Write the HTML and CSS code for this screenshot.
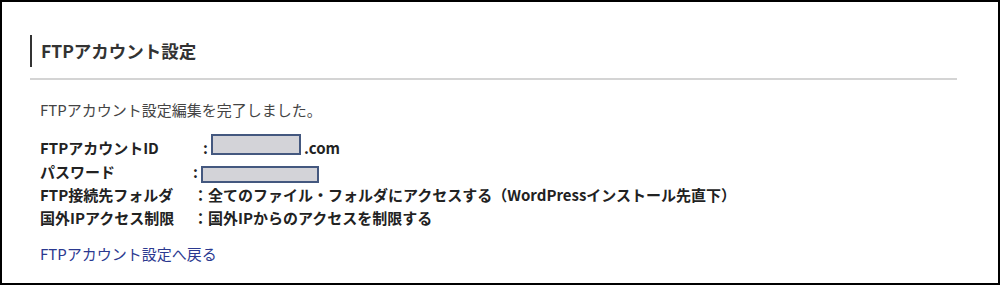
FILE: index.html
```html
<!DOCTYPE html>
<html lang="ja">
<head>
  <meta charset="UTF-8">
  <meta name="viewport" content="width=device-width, initial-scale=1.0">
  <title>FTPアカウント設定</title>
  <link rel="stylesheet" href="styles.css">
</head>
<body>
  <div class="frame">
    <div class="section">
      <!-- 見出し -->
      <div class="title-wrap">
        <h2 class="title">FTPアカウント設定</h2>
      </div>

      <div class="content">
        <p class="message">FTPアカウント設定編集を完了しました。</p>

        <!-- 設定内容 -->
        <div class="detail">
          <div class="row">
            <span class="label label-wide">FTPアカウントID</span><span class="colon">:</span><span class="mask mask-id"></span><span class="after">.com</span>
          </div>
          <div class="row">
            <span class="label">パスワード</span><span class="colon">:</span><span class="mask mask-pw"></span>
          </div>
          <div class="row">
            <span class="label">FTP接続先フォルダ</span><span>：全てのファイル・フォルダにアクセスする（WordPressインストール先直下）</span>
          </div>
          <div class="row">
            <span class="label">国外IPアクセス制限</span><span>：国外IPからのアクセスを制限する</span>
          </div>
        </div>

        <a class="back" href="#">FTPアカウント設定へ戻る</a>
      </div>
    </div>
  </div>
</body>
</html>
```

FILE: styles.css
```css
html, body {
  margin: 0;
  padding: 0;
  background: #fff;
  font-family: "Noto Sans CJK JP", sans-serif;
}
.frame {
  box-sizing: border-box;
  width: 1000px;
  height: 285px;
  border: 2px solid #000;
  padding: 33px 41px 0 28px;
}
/* 見出し */
.title-wrap {
  border-bottom: 2px solid #d4d4d4;
  padding-bottom: 11px;
}
.title {
  margin: 0;
  border-left: 2px solid #333;
  padding-left: 9px;
  font-size: 17.5px;
  line-height: 32px;
  font-weight: bold;
  color: #333;
}
.content {
  padding: 18px 0 0 10px;
  font-size: 15px;
  line-height: 23px;
}
.message {
  margin: 0 0 15px;
  color: #444;
}
.detail {
  font-weight: bold;
  color: #222;
}
.label {
  display: inline-block;
  width: 153px;
}
.label-wide {
  width: 163px;
}
.colon {
  display: inline-block;
  width: 8px;
}
/* 伏せ字 */
.mask {
  display: inline-block;
  box-sizing: border-box;
  vertical-align: middle;
  background: #d3d3d8;
  border: 2px solid #44587f;
}
.mask-id {
  width: 90px;
  height: 21px;
  position: relative;
  top: -5px;
}
.mask-pw {
  width: 118px;
  height: 17px;
}
.after {
  margin-left: 3px;
}
.back {
  display: inline-block;
  margin-top: 13px;
  color: #2b3990;
  text-decoration: none;
}
```
